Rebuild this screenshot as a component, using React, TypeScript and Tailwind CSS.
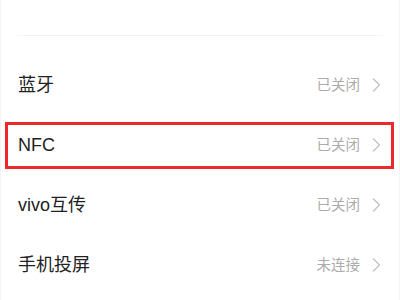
import React from "react";

const rows = [
  { label: "蓝牙", value: "已关闭" },
  { label: "NFC", value: "已关闭", highlight: true },
  { label: "vivo互传", value: "已关闭" },
  { label: "手机投屏", value: "未连接" },
];

function Chevron() {
  return (
    <svg width="9" height="14" viewBox="0 0 9 14" className="ml-[12px]" fill="none">
      <path d="M1.5 1 L7.5 7 L1.5 13" stroke="#c2c2c2" strokeWidth="1.3" strokeLinecap="round" strokeLinejoin="round" />
    </svg>
  );
}

export default function App() {
  return (
    <div
      className="w-[400px] h-[300px] bg-white overflow-hidden border-x border-[#f5f5f5]"
      style={{ fontFamily: '"Liberation Sans", "Noto Sans CJK SC", sans-serif' }}
    >
      <div className="pt-[35px] px-[16px]">
        <div className="h-px bg-[#f3f3f3]" />
      </div>
      <div className="pt-[19px]">
        {rows.map((r) => (
          <div key={r.label} className="relative h-[60px] flex items-center pl-[17px] pr-[18px]">
            <span className="text-[18px] text-[#222222] leading-none">{r.label}</span>
            <div className="ml-auto flex items-center">
              <span className="text-[14.5px] text-[#acacac] leading-none">{r.value}</span>
              <Chevron />
            </div>
            {r.highlight && (
              <div className="absolute left-[4px] top-[7px] w-[389px] h-[47px] border-[3px] border-[#ec2a2d] pointer-events-none" />
            )}
          </div>
        ))}
      </div>
    </div>
  );
}
